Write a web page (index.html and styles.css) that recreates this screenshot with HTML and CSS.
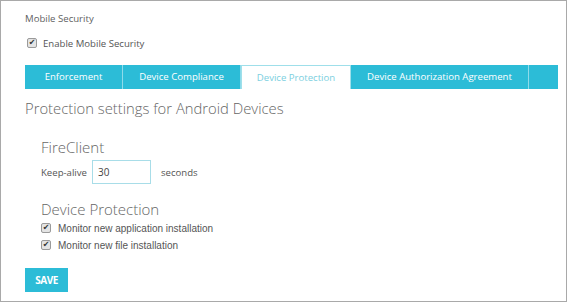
FILE: index.html
```html
<!DOCTYPE html>
<html lang="en">
<head>
    <meta charset="UTF-8">
    <title>Mobile Security</title>
    <link rel="stylesheet" href="styles.css">
</head>
<body>
    <div class="frame">
        <div class="section-title">Mobile Security</div>
        <label class="check-row top-check">
            <span class="box">&#10004;</span>
            <span>Enable Mobile Security</span>
        </label>

        <div class="tabs">
            <div class="tab tab-enf">Enforcement</div>
            <div class="tab tab-comp">Device Compliance</div>
            <div class="tab tab-prot active">Device Protection</div>
            <div class="tab tab-auth">Device Authorization Agreement</div>
            <div class="tab tab-blank"></div>
        </div>

        <h2 class="page-heading">Protection settings for Android Devices</h2>

        <div class="group">
            <h3 class="group-heading">FireClient</h3>
            <div class="field-row">
                <span class="field-label">Keep-alive</span>
                <input class="text-input" type="text" value="30">
                <span class="field-unit">seconds</span>
            </div>
        </div>

        <div class="group group-prot">
            <h3 class="group-heading">Device Protection</h3>
            <label class="check-row opt">
                <span class="box">&#10004;</span>
                <span>Monitor new application installation</span>
            </label>
            <label class="check-row opt">
                <span class="box">&#10004;</span>
                <span>Monitor new file installation</span>
            </label>
        </div>

        <button class="save-btn">SAVE</button>
    </div>
</body>
</html>
```

FILE: styles.css
```css
body {
    margin: 0;
    font-family: "Open Sans", Arial, sans-serif;
    color: #555;
    background: #fff;
}

.frame {
    box-sizing: border-box;
    width: 567px;
    height: 302px;
    border: 1px solid #a9a9a9;
    padding: 10px 0 0 24px;
}

.section-title {
    font-size: 9.6px;
    line-height: 16px;
    color: #5f5f5f;
}

.check-row {
    display: flex;
    align-items: center;
    font-size: 9.6px;
    color: #555;
}

.top-check {
    margin-top: 8px;
    height: 16px;
    padding-left: 2px;
}

.top-check .box {
    margin-right: 6px;
}

.box {
    box-sizing: border-box;
    width: 10px;
    height: 10px;
    border: 1px solid #9a9a9a;
    border-radius: 2px;
    background: #e4e4e4;
    color: #333;
    font-size: 8px;
    line-height: 8px;
    text-align: center;
    margin-right: 7px;
    font-family: "DejaVu Sans", sans-serif;
}

.tabs {
    display: flex;
    margin-top: 14px;
    width: 533px;
    height: 24px;
    background: #2cbcd7;
}

.tab {
    box-sizing: border-box;
    height: 24px;
    line-height: 23px;
    font-size: 9.6px;
    color: #fff;
    text-align: center;
    border-right: 1px solid #8fdbea;
}

.tab-enf { width: 98px; }
.tab-comp { width: 118px; }
.tab-prot { width: 110px; }
.tab-auth { width: 178px; }
.tab-blank { width: 29px; border-right: none; }

.tab.active {
    background: #fff;
    color: #7ccfe0;
    border: 1px solid #9fdfea;
    border-bottom: none;
}

.page-heading {
    margin: 8px 0 0;
    font-size: 14.8px;
    font-weight: 300;
    line-height: 22px;
    color: #666;
}

.group {
    padding-left: 16px;
    margin-top: 18px;
}

.group-heading {
    margin: 0;
    font-size: 15px;
    font-weight: 300;
    line-height: 20px;
    color: #666;
}

.field-row {
    display: flex;
    align-items: center;
    margin-top: 3px;
    font-size: 9.6px;
}

.text-input {
    box-sizing: border-box;
    width: 59px;
    height: 24px;
    margin: 0 10px 0 5px;
    padding: 0 5px;
    border: 1px solid #a8dde8;
    font-family: "Open Sans", Arial, sans-serif;
    font-size: 10px;
    color: #444;
    outline: none;
}

.group-prot {
    margin-top: 15px;
}

.opt {
    font-family: "Liberation Sans", Arial, sans-serif;
    font-size: 10px;
    height: 16px;
    margin-top: 1px;
}

.save-btn {
    margin-top: 15px;
    width: 43px;
    height: 24px;
    border: none;
    background: #2cbcd7;
    color: #fff;
    font-family: "Open Sans", Arial, sans-serif;
    font-weight: 700;
    font-size: 10px;
    letter-spacing: -0.5px;
    padding: 0;
}
```
